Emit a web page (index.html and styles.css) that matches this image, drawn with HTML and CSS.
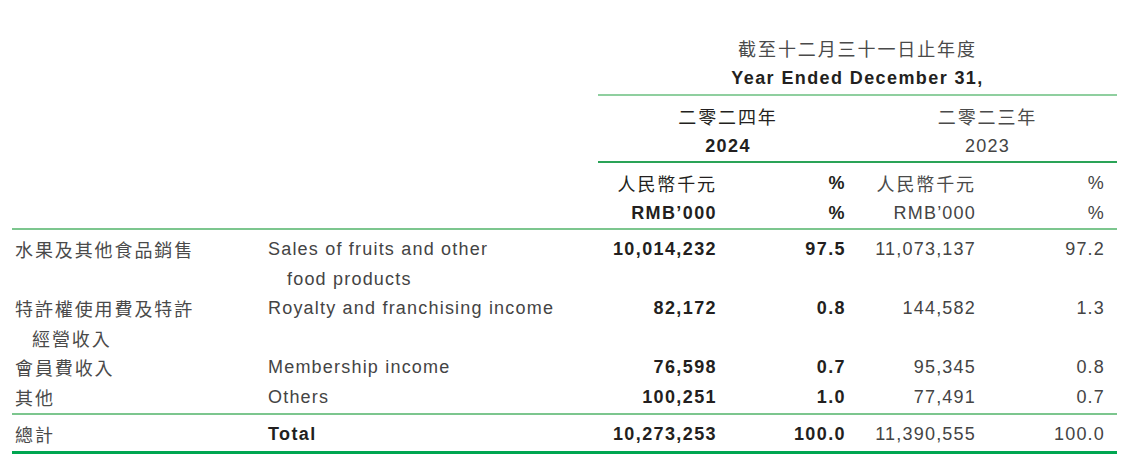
FILE: index.html
```html
<!DOCTYPE html>
<html lang="zh-Hant">
<head>
    <meta charset="UTF-8">
    <meta name="viewport" content="width=device-width, initial-scale=1.0">
    <title>Revenue by Type</title>
    <link rel="stylesheet" href="styles.css">
</head>
<body>
    <!-- Revenue breakdown table -->
    <table class="revenue">
        <colgroup>
            <col class="col-zh">
            <col class="col-en">
            <col class="col-num">
            <col class="col-num">
            <col class="col-num">
            <col class="col-last">
        </colgroup>
        <thead>
            <tr class="period">
                <th colspan="2"></th>
                <th colspan="4" class="period-head"><span class="zh">截至十二月三十一日止年度</span><b>Year Ended December 31,</b></th>
            </tr>
            <tr class="years">
                <th colspan="2"></th>
                <th colspan="2" class="year cur"><span class="zh">二零二四年</span>2024</th>
                <th colspan="2" class="year"><span class="zh">二零二三年</span>2023</th>
            </tr>
            <tr class="units">
                <th colspan="2"></th>
                <th class="num cur"><span class="zh">人民幣千元</span>RMB’000</th>
                <th class="num cur pct"><span>%</span>%</th>
                <th class="num"><span class="zh">人民幣千元</span>RMB’000</th>
                <th class="num pct"><span>%</span>%</th>
            </tr>
        </thead>
        <tbody>
            <tr class="first">
                <td class="label-zh zh">水果及其他食品銷售</td>
                <td class="label-en">Sales of fruits and other<br>food products</td>
                <td class="num cur">10,014,232</td>
                <td class="num cur pct">97.5</td>
                <td class="num">11,073,137</td>
                <td class="num pct">97.2</td>
            </tr>
            <tr>
                <td class="label-zh zh">特許權使用費及特許<br>經營收入</td>
                <td class="label-en">Royalty and franchising income</td>
                <td class="num cur">82,172</td>
                <td class="num cur pct">0.8</td>
                <td class="num">144,582</td>
                <td class="num pct">1.3</td>
            </tr>
            <tr>
                <td class="label-zh zh">會員費收入</td>
                <td class="label-en">Membership income</td>
                <td class="num cur">76,598</td>
                <td class="num cur pct">0.7</td>
                <td class="num">95,345</td>
                <td class="num pct">0.8</td>
            </tr>
            <tr class="last">
                <td class="label-zh zh">其他</td>
                <td class="label-en">Others</td>
                <td class="num cur">100,251</td>
                <td class="num cur pct">1.0</td>
                <td class="num">77,491</td>
                <td class="num pct">0.7</td>
            </tr>
        </tbody>
        <tfoot>
            <tr class="total">
                <td class="label-zh zh">總計</td>
                <td class="label-en"><b>Total</b></td>
                <td class="num cur">10,273,253</td>
                <td class="num cur pct">100.0</td>
                <td class="num">11,390,555</td>
                <td class="num pct">100.0</td>
            </tr>
        </tfoot>
    </table>
</body>
</html>
```

FILE: styles.css
```css
/* Page */
body {
    margin: 0;
    background-color: #fff;
    font-family: "Liberation Sans", Arial, "Noto Sans CJK TC", sans-serif;
    font-size: 18px;
    color: #444;
    letter-spacing: 1.2px;
}

.zh {
    font-family: "Noto Sans CJK TC", "Noto Sans CJK SC", sans-serif;
    letter-spacing: 1.9px;
    color: #4a4a4a;
}

b {
    color: #231f20;
    letter-spacing: 1.4px;
}

/* Table */
.revenue {
    table-layout: fixed;
    width: 1105px;
    margin: 33px 0 0 12px;
    border-collapse: collapse;
    border-spacing: 0;
}

.col-zh { width: 256px; }
.col-en { width: 330px; }
.col-num { width: 130px; }
.col-last { width: 129px; }

.revenue th,
.revenue td {
    padding: 0;
    height: 0;
    line-height: 30px;
    font-weight: normal;
    vertical-align: top;
    text-align: left;
}

/* Header cells hold two stacked lines */
.revenue th span,
.revenue th b {
    display: block;
    height: 30px;
    line-height: 30px;
    overflow: hidden;
}

.period-head {
    text-align: center !important;
    padding-bottom: 1px !important;
    border-bottom: 2px solid #8fcf9f;
}

.year {
    text-align: center !important;
    padding-top: 5px !important;
    border-bottom: 2px solid #2aa357;
}

.units th {
    padding-top: 5px;
    border-bottom: 2px solid #7cc68e;
}

/* Cells */
.num {
    text-align: right !important;
    padding-right: 12px !important;
    white-space: nowrap;
}

.cur {
    font-weight: bold !important;
    color: #231f20;
    letter-spacing: 1.4px;
}

.cur .zh {
    font-weight: normal;
    color: #231f20;
    letter-spacing: 1.9px;
}

.cur.num {
    padding-right: 11px !important;
}

.cur.pct {
    padding-right: 12px !important;
}

.label-zh {
    padding-left: 20px !important;
    text-indent: -17px;
}

.label-en {
    padding-left: 19px !important;
    text-indent: -19px;
}

/* Body rows */
.revenue tbody td {
    line-height: 29.6px;
}

.revenue tbody tr.first td {
    padding-top: 5px;
}

.revenue tbody tr.last td {
    padding-bottom: 0;
    border-bottom: 2px solid #7cc68e;
}

.total td {
    padding-top: 4px !important;
    padding-bottom: 2px !important;
    border-bottom: 3px solid #00a651;
}
```
